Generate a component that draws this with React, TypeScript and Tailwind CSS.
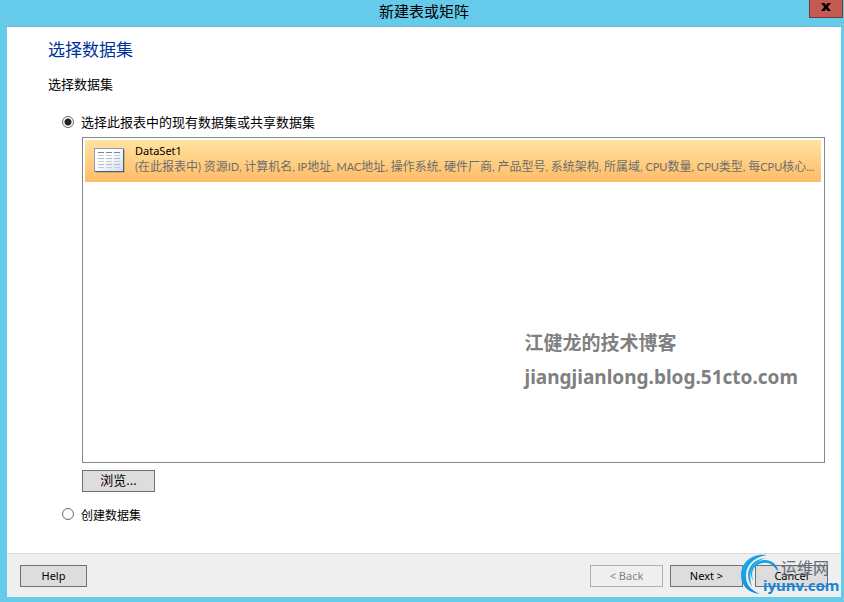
import React, { useState } from "react";

const fields = [
  "资源ID",
  "计算机名",
  "IP地址",
  "MAC地址",
  "操作系统",
  "硬件厂商",
  "产品型号",
  "系统架构",
  "所属域",
  "CPU数量",
  "CPU类型",
  "每CPU核心...",
];

const summary = `(在此报表中) ${fields.join(", ")}`;

type ButtonProps = React.ButtonHTMLAttributes<HTMLButtonElement>;

function DialogButton({ className = "", ...rest }: ButtonProps) {
  return (
    <button
      type="button"
      className={`h-[22px] border border-[#707070] bg-[#dddddd] text-black disabled:border-[#adb2b5] disabled:bg-[#efefef] disabled:text-[#838383] ${className}`}
      {...rest}
    />
  );
}

// Han characters are set one size larger than the Latin letters between them.
function MixedText({ text }: { text: string }) {
  return (
    <>
      {text.split(/([\u4e00-\u9fff]+)/).map((part, i) =>
        i % 2 ? (
          <span key={i} className="text-[12px]">
            {part}
          </span>
        ) : (
          part
        ),
      )}
    </>
  );
}

function DataSetIcon() {
  const rows = [4, 7, 10, 13, 16, 19];
  return (
    <svg width="32" height="26" viewBox="0 0 32 26" className="shrink-0" aria-hidden="true">
      <defs>
        <linearGradient id="sheet" x1="0" y1="0" x2="1" y2="1">
          <stop offset="0.4" stopColor="#ffffff" />
          <stop offset="1" stopColor="#cfd9ee" />
        </linearGradient>
      </defs>
      <rect x="2" y="2" width="29" height="23" fill="#a98a5a" opacity="0.5" />
      <rect x="0.5" y="0.5" width="29" height="23" fill="url(#sheet)" stroke="#8d9cb5" />
      <path d="M29.5 1v23M1 23.5h29" stroke="#4c5f80" fill="none" />
      {rows.map((y, i) => (
        <path
          key={y}
          d={`M4 ${y + 0.5}h6M12 ${y + 0.5}h6M20 ${y + 0.5}h6`}
          stroke={i === 0 ? "#7b8799" : i % 2 ? "#c8cdd4" : "#a9b9cf"}
        />
      ))}
    </svg>
  );
}

function SiteMark() {
  return (
    <div className="pointer-events-none absolute right-[3px] bottom-1 h-[44px] w-[100px]">
      <svg width="46" height="44" viewBox="0 0 46 44" className="absolute top-0 left-0" aria-hidden="true">
        <defs>
          <linearGradient id="swirl" x1="0" y1="0" x2="1" y2="1">
            <stop offset="0" stopColor="#19b5f1" />
            <stop offset="1" stopColor="#1272cf" />
          </linearGradient>
        </defs>
        <path d="M26 1C9-1 0 10 0 21c0 10 7 18 19 19C9 36 4 29 5 20 6 10 14 3 26 1Z" fill="url(#swirl)" />
        <path d="M11 33C2 20 9 4 26 4 13 6 6 17 11 33Z" fill="#22a5e8" />
        <path d="M12 27C6 15 15 6 23 6c9 0 14 6 14 12C33 11 28 8 22 9 14 10 9 16 12 27Z" fill="url(#swirl)" />
      </svg>
      <span className="absolute top-1 left-[40px] text-[16px] leading-5 whitespace-nowrap text-[#656b78]">运维网</span>
      <span className="absolute top-[21px] left-[22px] text-[15px] leading-5 font-bold whitespace-nowrap text-[#1686da]">
        iyunv.com
      </span>
    </div>
  );
}

export default function App() {
  const [source, setSource] = useState("existing");
  const radio =
    "m-0 size-3 shrink-0 appearance-none rounded-full border border-[#666666] bg-white checked:bg-[radial-gradient(circle,#222222_0_3px,#ffffff_4px)]";

  return (
    <div className="relative flex min-h-screen flex-col bg-[#66caea] pr-[3px] pb-[5px] pl-[7px] font-['Noto_Sans','Noto_Sans_CJK_SC',sans-serif] text-black">
      <header className="relative h-[26px]">
        <h1 className="text-center text-[15px] leading-[22px]">新建表或矩阵</h1>
        <button
          type="button"
          aria-label="关闭"
          className="absolute top-0 -right-[2px] flex h-[18px] w-[34px] justify-center border border-t-0 border-[#6b3a39] bg-[#c35b52] pt-[3px]"
        >
          <svg width="10" height="9" viewBox="0 0 10 9" aria-hidden="true">
            <path d="M0 0h3.5L5 2.3 6.500 0H10L6.800 4 10 8H6.500L5 5.700 3.500 8H0L3.200 4Z" fill="#000000" />
          </svg>
        </button>
      </header>

      <main className="flex flex-1 flex-col border-t border-[#78b0c9] bg-white pt-[11px] pr-4 pb-[27px] pl-[41px]">
        <h2 className="text-[17px] leading-6 text-[#003399]">选择数据集</h2>
        <p className="mt-3 text-[13px] leading-5">选择数据集</p>

        <div className="mt-[18px] flex items-center gap-[7px] pl-[14px]">
          <input id="existing" type="radio" name="source" className={radio} checked={source === "existing"} onChange={() => setSource("existing")} />
          <label htmlFor="existing" className="text-[13px] leading-5">
            选择此报表中的现有数据集或共享数据集
          </label>
        </div>

        <div className="relative mt-[5px] ml-[34px] flex-1 border border-[#828790] py-[2px] pr-[3px] pl-[2px]">
          <button
            type="button"
            className="flex h-[42px] w-full items-center gap-[9px] bg-linear-to-b from-[#ffe4a0] to-[#ffbb66] pr-1 pl-[9px] text-left"
          >
            <DataSetIcon />
            <span className="min-w-0 flex-1 pb-[3px]">
              <span className="block text-[11px] leading-[14px]">DataSet1</span>
              <span className="block truncate font-['Lato','Noto_Sans_CJK_SC',sans-serif] text-[11px] leading-[17px] text-[#6d6d6d]">
                <MixedText text={summary} />
              </span>
            </span>
          </button>
          <div className="pointer-events-none absolute right-[26px] bottom-[68px] text-[19px] leading-[34px] font-bold text-[#808080]">
            <p>江健龙的技术博客</p>
            <p>jiangjianlong.blog.51cto.com</p>
          </div>
        </div>

        <DialogButton className="mt-[7px] ml-[34px] w-[73px] pb-[2px] text-[13px]">浏览...</DialogButton>

        <div className="mt-[10px] flex items-center gap-[7px] pl-[14px]">
          <input id="create" type="radio" name="source" className={radio} checked={source === "create"} onChange={() => setSource("create")} />
          <label htmlFor="create" className="pt-1 text-[12px] leading-5">
            创建数据集
          </label>
        </div>
      </main>

      <footer className="flex h-11 items-center border-t border-[#d9d9d9] bg-[#efefef] pr-[13px] pl-[13px] text-[11px]">
        <DialogButton className="w-[67px] pt-[2px]">Help</DialogButton>
        <DialogButton className="mr-[7px] ml-auto w-[73px] pt-[2px]" disabled>
          &lt; Back
        </DialogButton>
        <DialogButton className="mr-3 w-[73px] pt-[2px]">Next &gt;</DialogButton>
        <DialogButton className="w-[73px] pt-[2px]">Cancel</DialogButton>
      </footer>
      <SiteMark />
    </div>
  );
}
